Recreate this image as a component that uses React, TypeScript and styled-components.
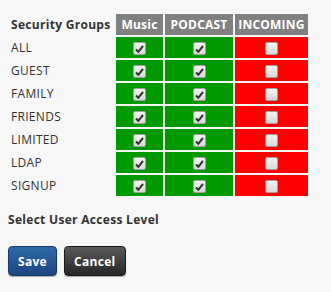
import React from "react";
import styled, { createGlobalStyle } from "styled-components";

interface Group {
    name: string;
    music: boolean;
    podcast: boolean;
    incoming: boolean;
}

const groups: Group[] = [
    { name: "ALL", music: true, podcast: true, incoming: false },
    { name: "GUEST", music: true, podcast: true, incoming: false },
    { name: "FAMILY", music: true, podcast: true, incoming: false },
    { name: "FRIENDS", music: true, podcast: true, incoming: false },
    { name: "LIMITED", music: true, podcast: true, incoming: false },
    { name: "LDAP", music: true, podcast: true, incoming: false },
    { name: "SIGNUP", music: true, podcast: true, incoming: false },
];

const Global = createGlobalStyle`
    body {
        margin: 0;
        background: #f7f7f7;
        font-family: "Open Sans", "DejaVu Sans", sans-serif;
        color: #333;
    }
`;

const Check: React.FC<{ checked: boolean }> = ({ checked }) => (
    <Box>
        {checked && (
            <svg width="9" height="8" viewBox="0 0 9 8">
                <path d="M1 4.5 L3.3 6.8 L8 1" stroke="#333" strokeWidth="2" fill="none" />
            </svg>
        )}
    </Box>
);

const App: React.FC = () => (
    <Page>
        <Global />
        <Table>
            <colgroup>
                <col style={{ width: 104 }} />
                <col style={{ width: 47 }} />
                <col style={{ width: 68 }} />
                <col style={{ width: 73 }} />
            </colgroup>
            <thead>
                <tr>
                    <Label as="th" $bold>
                        Security Groups
                    </Label>
                    <Head>Music</Head>
                    <Head>PODCAST</Head>
                    <Head>INCOMING</Head>
                </tr>
            </thead>
            <tbody>
                {groups.map(g => (
                    <tr key={g.name}>
                        <Label>{g.name}</Label>
                        <Cell $on={g.music}>
                            <Check checked={g.music} />
                        </Cell>
                        <Cell $on={g.podcast}>
                            <Check checked={g.podcast} />
                        </Cell>
                        <Cell $on={g.incoming}>
                            <Check checked={g.incoming} />
                        </Cell>
                    </tr>
                ))}
            </tbody>
        </Table>
        <Title>Select User Access Level</Title>
        <Buttons>
            <Button $primary>Save</Button>
            <Button>Cancel</Button>
        </Buttons>
    </Page>
);

const Page = styled.div`
    padding: 12px 8px;
`;

const Table = styled.table`
    table-layout: fixed;
    width: 302px;
    border-collapse: separate;
    border-spacing: 2px;
    font-size: 12px;
`;

const Label = styled.td<{ $bold?: boolean }>`
    height: 21px;
    padding: 0 0 0 1px;
    text-align: left;
    font-weight: ${({ $bold }) => ($bold ? "bold" : "normal")};
    letter-spacing: 0.3px;
    white-space: nowrap;
`;

const Head = styled.th`
    height: 20px;
    padding: 0;
    background: #808080;
    color: #fff;
    font-weight: bold;
    letter-spacing: 0.2px;
    text-align: center;
    white-space: nowrap;
    overflow: hidden;
`;

const Cell = styled.td<{ $on: boolean }>`
    height: 21px;
    padding: 0;
    background: ${({ $on }) => ($on ? "#009a00" : "#ff0000")};
    text-align: center;
    vertical-align: middle;
`;

const Box = styled.span`
    display: inline-flex;
    align-items: center;
    justify-content: center;
    width: 11px;
    height: 11px;
    vertical-align: middle;
    border: 1px solid #a0a0a0;
    border-radius: 2px;
    background: linear-gradient(#f4f4f4, #d8d8d8);
`;

const Title = styled.div`
    margin-top: 13px;
    font-size: 12px;
    font-weight: bold;
    letter-spacing: 0.3px;
`;

const Buttons = styled.div`
    display: flex;
    gap: 7px;
    margin-top: 18px;
`;

const Button = styled.button<{ $primary?: boolean }>`
    height: 30px;
    padding: 0 9px;
    border-radius: 4px;
    border: 1px solid ${({ $primary }) => ($primary ? "#163a6a" : "#1a1a1a")};
    background: ${({ $primary }) =>
        $primary
            ? "linear-gradient(#2f69aa, #1c4680)"
            : "linear-gradient(#5a5a5a, #262626)"};
    color: #fff;
    font-family: "Open Sans", "DejaVu Sans", sans-serif;
    font-size: 12px;
    font-weight: bold;
    letter-spacing: 0.3px;
    box-shadow: 0 1px 1px rgba(0, 0, 0, 0.3);
`;

export default App;
